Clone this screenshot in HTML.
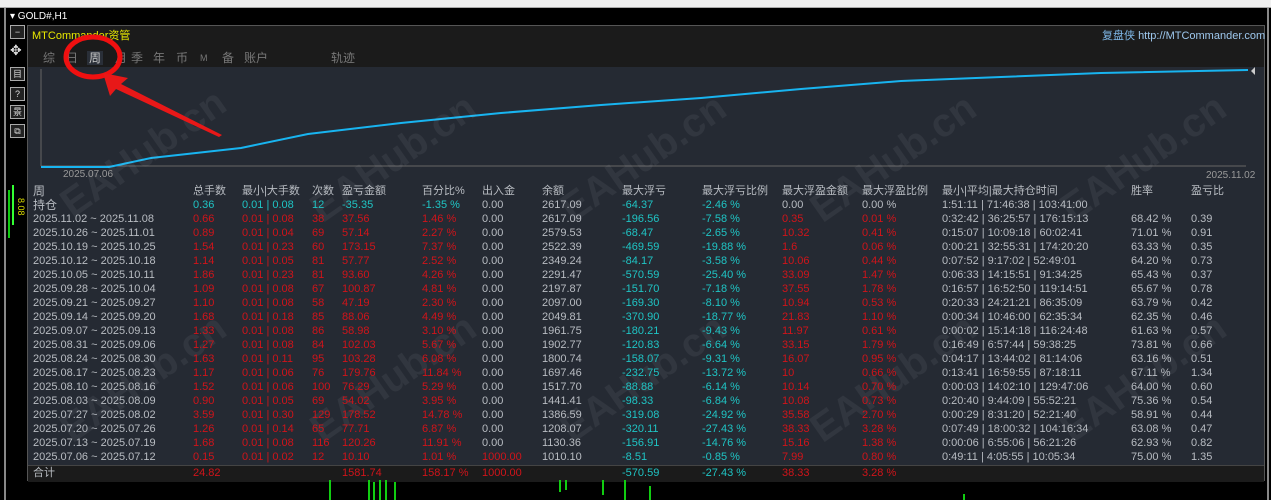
<!DOCTYPE html>
<html><head><meta charset="utf-8"><style>
*{margin:0;padding:0;box-sizing:border-box}
body{width:1271px;height:500px;overflow:hidden;background:#000;font-family:"Liberation Sans","Noto Sans CJK SC",sans-serif;position:relative}
.top{position:absolute;left:0;top:0;width:1271px;height:8px;background:#f0f0f0;border-bottom:1px solid #aaa}
.frame{position:absolute;left:4px;top:8px;width:1265px;height:492px;background:#000;border-left:2px solid #888;border-right:2px solid #888}
.t{position:absolute;font-size:11px;white-space:nowrap;line-height:13px}
.panel{position:absolute;left:27px;top:25px;width:1238px;height:456px;border:1px solid #555;background:#252a33}
.hdr{position:absolute;left:0;top:0;width:100%;height:41px;background:#1b1b1b}
.tab{position:absolute;top:25px;color:#777;font-size:12px;line-height:14px}
.r{position:absolute;left:0;width:100%;height:14px}
.r span{position:absolute;font-size:11px;white-space:nowrap;top:0;line-height:14px;color:#b8bcc2}
.a{left:5px}.b{left:165px}.c{left:214px}.d{left:284px}.e{left:314px}.f{left:394px}.g{left:454px}.h{left:514px}.i{left:594px}.j{left:674px}.k{left:754px}.l{left:834px}.m{left:914px}.n{left:1103px}.o{left:1163px}
.R span.b,.R span.c,.R span.d,.R span.e,.R span.f,.R span.k,.R span.l{color:#d0141a}
.R span.i,.R span.j{color:#1fc4c4}
.icon{position:absolute;left:10px;width:15px;height:14px;border:1px solid #aaa;background:#222;color:#ddd;font-size:9px;text-align:center;line-height:12px}
.wm{position:absolute;font-size:40px;font-weight:bold;color:rgba(255,255,255,0.06);transform:rotate(-35deg);white-space:nowrap}
</style></head><body>
<div class="top"></div>
<div class="frame"></div>
<div class="t" style="left:10px;top:10px;color:#fff;font-size:10px">▾ GOLD#,H1</div>
<div class="icon" style="top:25px">−</div>
<div class="t" style="left:10px;top:44px;color:#ddd;font-size:14px">✥</div>
<div class="icon" style="top:67px">目</div>
<div class="icon" style="top:87px">?</div>
<div class="icon" style="top:105px">景</div>
<div class="icon" style="top:124px">⧉</div>
<div style="position:absolute;left:8px;top:190px;width:2px;height:48px;background:#1c1"></div>
<div style="position:absolute;left:12px;top:185px;width:2px;height:40px;background:#3f3"></div>
<div style="position:absolute;left:15px;top:195px;width:8px;height:14px;color:#dd0;font-size:9px;transform:rotate(90deg)">8.08</div>
<div class="panel">
 <div class="hdr">
  <div class="t" style="left:4px;top:4px;color:#e8e800;font-size:11px">MTCommander资管</div>
  <div class="t" style="left:1074px;top:4px;color:#7fb8e8;font-size:11px">复盘侠 <span style="color:#9ec8ee">http://MTCommander.com</span></div>
  <div class="tab" style="left:15px">综</div>
  <div class="tab" style="left:38px">日</div>
  <div class="tab" style="left:59px;color:#ccc;background:#2a2f38;padding:0 2px">周</div>
  <div class="tab" style="left:87px">月</div>
  <div class="tab" style="left:103px">季</div>
  <div class="tab" style="left:125px">年</div>
  <div class="tab" style="left:148px">币</div>
  <div class="tab" style="left:172px;font-size:9px">M</div>
  <div class="tab" style="left:194px">备</div>
  <div class="tab" style="left:216px">账户</div>
  <div class="tab" style="left:303px">轨迹</div>
 </div>
 <svg style="position:absolute;left:0;top:0" width="1238" height="160">
  <line x1="13" y1="43" x2="13" y2="140" stroke="#666"/>
  <line x1="13" y1="140" x2="1218" y2="140" stroke="#666"/>
  <polyline fill="none" stroke="#18b4f0" stroke-width="2" points="13,141 81,141 123,132 213,122 280,108 373,97 473,87 573,79 673,72 773,63 873,55 973,51 1073,47 1220,44"/>
 </svg>
 <div class="t" style="left:35px;top:142px;color:#999;font-size:10px">2025.07.06</div>
 <div class="t" style="left:1178px;top:143px;color:#999;font-size:10px">2025.11.02</div>
 <div class="wm" style="left:20px;top:105px">EAHub.cn</div>
 <div class="wm" style="left:270px;top:110px">EAHub.cn</div>
 <div class="wm" style="left:520px;top:110px">EAHub.cn</div>
 <div class="wm" style="left:770px;top:110px">EAHub.cn</div>
 <div class="wm" style="left:1020px;top:110px">EAHub.cn</div>
 <div class="wm" style="left:20px;top:330px">EAHub.cn</div>
 <div class="wm" style="left:270px;top:330px">EAHub.cn</div>
 <div class="wm" style="left:520px;top:330px">EAHub.cn</div>
 <div class="wm" style="left:770px;top:330px">EAHub.cn</div>
 <div class="wm" style="left:1020px;top:330px">EAHub.cn</div>
 <div class="r" style="top:158px"><span class="a" style="font-size:12px">周</span><span class="b">总手数</span><span class="c">最小|大手数</span><span class="d">次数</span><span class="e">盈亏金额</span><span class="f">百分比%</span><span class="g">出入金</span><span class="h">余额</span><span class="i">最大浮亏</span><span class="j">最大浮亏比例</span><span class="k">最大浮盈金额</span><span class="l">最大浮盈比例</span><span class="m">最小|平均|最大持仓时间</span><span class="n">胜率</span><span class="o">盈亏比</span></div>
 <div class="r" style="top:172px"><span class="a" style="font-size:12px">持仓</span><span class="b" style="color:#1fc4c4">0.36</span><span class="c" style="color:#1fc4c4">0.01 | 0.08</span><span class="d" style="color:#1fc4c4">12</span><span class="e" style="color:#1fc4c4">-35.35</span><span class="f" style="color:#1fc4c4">-1.35 %</span><span class="g">0.00</span><span class="h">2617.09</span><span class="i" style="color:#1fc4c4">-64.37</span><span class="j" style="color:#1fc4c4">-2.46 %</span><span class="k">0.00</span><span class="l">0.00 %</span><span class="m">1:51:11 | 71:46:38 | 103:41:00</span></div>
 <div class="r R" style="top:186px"><span class="a">2025.11.02 ~ 2025.11.08</span><span class="b">0.66</span><span class="c">0.01 | 0.08</span><span class="d">38</span><span class="e">37.56</span><span class="f">1.46 %</span><span class="g">0.00</span><span class="h">2617.09</span><span class="i">-196.56</span><span class="j">-7.58 %</span><span class="k">0.35</span><span class="l">0.01 %</span><span class="m">0:32:42 | 36:25:57 | 176:15:13</span><span class="n">68.42 %</span><span class="o">0.39</span></div>
 <div class="r R" style="top:200px"><span class="a">2025.10.26 ~ 2025.11.01</span><span class="b">0.89</span><span class="c">0.01 | 0.04</span><span class="d">69</span><span class="e">57.14</span><span class="f">2.27 %</span><span class="g">0.00</span><span class="h">2579.53</span><span class="i">-68.47</span><span class="j">-2.65 %</span><span class="k">10.32</span><span class="l">0.41 %</span><span class="m">0:15:07 | 10:09:18 | 60:02:41</span><span class="n">71.01 %</span><span class="o">0.91</span></div>
 <div class="r R" style="top:214px"><span class="a">2025.10.19 ~ 2025.10.25</span><span class="b">1.54</span><span class="c">0.01 | 0.23</span><span class="d">60</span><span class="e">173.15</span><span class="f">7.37 %</span><span class="g">0.00</span><span class="h">2522.39</span><span class="i">-469.59</span><span class="j">-19.88 %</span><span class="k">1.6</span><span class="l">0.06 %</span><span class="m">0:00:21 | 32:55:31 | 174:20:20</span><span class="n">63.33 %</span><span class="o">0.35</span></div>
 <div class="r R" style="top:228px"><span class="a">2025.10.12 ~ 2025.10.18</span><span class="b">1.14</span><span class="c">0.01 | 0.05</span><span class="d">81</span><span class="e">57.77</span><span class="f">2.52 %</span><span class="g">0.00</span><span class="h">2349.24</span><span class="i">-84.17</span><span class="j">-3.58 %</span><span class="k">10.06</span><span class="l">0.44 %</span><span class="m">0:07:52 | 9:17:02 | 52:49:01</span><span class="n">64.20 %</span><span class="o">0.73</span></div>
 <div class="r R" style="top:242px"><span class="a">2025.10.05 ~ 2025.10.11</span><span class="b">1.86</span><span class="c">0.01 | 0.23</span><span class="d">81</span><span class="e">93.60</span><span class="f">4.26 %</span><span class="g">0.00</span><span class="h">2291.47</span><span class="i">-570.59</span><span class="j">-25.40 %</span><span class="k">33.09</span><span class="l">1.47 %</span><span class="m">0:06:33 | 14:15:51 | 91:34:25</span><span class="n">65.43 %</span><span class="o">0.37</span></div>
 <div class="r R" style="top:256px"><span class="a">2025.09.28 ~ 2025.10.04</span><span class="b">1.09</span><span class="c">0.01 | 0.08</span><span class="d">67</span><span class="e">100.87</span><span class="f">4.81 %</span><span class="g">0.00</span><span class="h">2197.87</span><span class="i">-151.70</span><span class="j">-7.18 %</span><span class="k">37.55</span><span class="l">1.78 %</span><span class="m">0:16:57 | 16:52:50 | 119:14:51</span><span class="n">65.67 %</span><span class="o">0.78</span></div>
 <div class="r R" style="top:270px"><span class="a">2025.09.21 ~ 2025.09.27</span><span class="b">1.10</span><span class="c">0.01 | 0.08</span><span class="d">58</span><span class="e">47.19</span><span class="f">2.30 %</span><span class="g">0.00</span><span class="h">2097.00</span><span class="i">-169.30</span><span class="j">-8.10 %</span><span class="k">10.94</span><span class="l">0.53 %</span><span class="m">0:20:33 | 24:21:21 | 86:35:09</span><span class="n">63.79 %</span><span class="o">0.42</span></div>
 <div class="r R" style="top:284px"><span class="a">2025.09.14 ~ 2025.09.20</span><span class="b">1.68</span><span class="c">0.01 | 0.18</span><span class="d">85</span><span class="e">88.06</span><span class="f">4.49 %</span><span class="g">0.00</span><span class="h">2049.81</span><span class="i">-370.90</span><span class="j">-18.77 %</span><span class="k">21.83</span><span class="l">1.10 %</span><span class="m">0:00:34 | 10:46:00 | 62:35:34</span><span class="n">62.35 %</span><span class="o">0.46</span></div>
 <div class="r R" style="top:298px"><span class="a">2025.09.07 ~ 2025.09.13</span><span class="b">1.33</span><span class="c">0.01 | 0.08</span><span class="d">86</span><span class="e">58.98</span><span class="f">3.10 %</span><span class="g">0.00</span><span class="h">1961.75</span><span class="i">-180.21</span><span class="j">-9.43 %</span><span class="k">11.97</span><span class="l">0.61 %</span><span class="m">0:00:02 | 15:14:18 | 116:24:48</span><span class="n">61.63 %</span><span class="o">0.57</span></div>
 <div class="r R" style="top:312px"><span class="a">2025.08.31 ~ 2025.09.06</span><span class="b">1.27</span><span class="c">0.01 | 0.08</span><span class="d">84</span><span class="e">102.03</span><span class="f">5.67 %</span><span class="g">0.00</span><span class="h">1902.77</span><span class="i">-120.83</span><span class="j">-6.64 %</span><span class="k">33.15</span><span class="l">1.79 %</span><span class="m">0:16:49 | 6:57:44 | 59:38:25</span><span class="n">73.81 %</span><span class="o">0.66</span></div>
 <div class="r R" style="top:326px"><span class="a">2025.08.24 ~ 2025.08.30</span><span class="b">1.63</span><span class="c">0.01 | 0.11</span><span class="d">95</span><span class="e">103.28</span><span class="f">6.08 %</span><span class="g">0.00</span><span class="h">1800.74</span><span class="i">-158.07</span><span class="j">-9.31 %</span><span class="k">16.07</span><span class="l">0.95 %</span><span class="m">0:04:17 | 13:44:02 | 81:14:06</span><span class="n">63.16 %</span><span class="o">0.51</span></div>
 <div class="r R" style="top:340px"><span class="a">2025.08.17 ~ 2025.08.23</span><span class="b">1.17</span><span class="c">0.01 | 0.06</span><span class="d">76</span><span class="e">179.76</span><span class="f">11.84 %</span><span class="g">0.00</span><span class="h">1697.46</span><span class="i">-232.75</span><span class="j">-13.72 %</span><span class="k">10</span><span class="l">0.66 %</span><span class="m">0:13:41 | 16:59:55 | 87:18:11</span><span class="n">67.11 %</span><span class="o">1.34</span></div>
 <div class="r R" style="top:354px"><span class="a">2025.08.10 ~ 2025.08.16</span><span class="b">1.52</span><span class="c">0.01 | 0.06</span><span class="d">100</span><span class="e">76.29</span><span class="f">5.29 %</span><span class="g">0.00</span><span class="h">1517.70</span><span class="i">-88.88</span><span class="j">-6.14 %</span><span class="k">10.14</span><span class="l">0.70 %</span><span class="m">0:00:03 | 14:02:10 | 129:47:06</span><span class="n">64.00 %</span><span class="o">0.60</span></div>
 <div class="r R" style="top:368px"><span class="a">2025.08.03 ~ 2025.08.09</span><span class="b">0.90</span><span class="c">0.01 | 0.05</span><span class="d">69</span><span class="e">54.02</span><span class="f">3.95 %</span><span class="g">0.00</span><span class="h">1441.41</span><span class="i">-98.33</span><span class="j">-6.84 %</span><span class="k">10.08</span><span class="l">0.73 %</span><span class="m">0:20:40 | 9:44:09 | 55:52:21</span><span class="n">75.36 %</span><span class="o">0.54</span></div>
 <div class="r R" style="top:382px"><span class="a">2025.07.27 ~ 2025.08.02</span><span class="b">3.59</span><span class="c">0.01 | 0.30</span><span class="d">129</span><span class="e">178.52</span><span class="f">14.78 %</span><span class="g">0.00</span><span class="h">1386.59</span><span class="i">-319.08</span><span class="j">-24.92 %</span><span class="k">35.58</span><span class="l">2.70 %</span><span class="m">0:00:29 | 8:31:20 | 52:21:40</span><span class="n">58.91 %</span><span class="o">0.44</span></div>
 <div class="r R" style="top:396px"><span class="a">2025.07.20 ~ 2025.07.26</span><span class="b">1.26</span><span class="c">0.01 | 0.14</span><span class="d">65</span><span class="e">77.71</span><span class="f">6.87 %</span><span class="g">0.00</span><span class="h">1208.07</span><span class="i">-320.11</span><span class="j">-27.43 %</span><span class="k">38.33</span><span class="l">3.28 %</span><span class="m">0:07:49 | 18:00:32 | 104:16:34</span><span class="n">63.08 %</span><span class="o">0.47</span></div>
 <div class="r R" style="top:410px"><span class="a">2025.07.13 ~ 2025.07.19</span><span class="b">1.68</span><span class="c">0.01 | 0.08</span><span class="d">116</span><span class="e">120.26</span><span class="f">11.91 %</span><span class="g">0.00</span><span class="h">1130.36</span><span class="i">-156.91</span><span class="j">-14.76 %</span><span class="k">15.16</span><span class="l">1.38 %</span><span class="m">0:00:06 | 6:55:06 | 56:21:26</span><span class="n">62.93 %</span><span class="o">0.82</span></div>
 <div class="r R" style="top:424px"><span class="a">2025.07.06 ~ 2025.07.12</span><span class="b">0.15</span><span class="c">0.01 | 0.02</span><span class="d">12</span><span class="e">10.10</span><span class="f">1.01 %</span><span class="g" style="color:#d0141a">1000.00</span><span class="h">1010.10</span><span class="i">-8.51</span><span class="j">-0.85 %</span><span class="k">7.99</span><span class="l">0.80 %</span><span class="m">0:49:11 | 4:05:55 | 10:05:34</span><span class="n">75.00 %</span><span class="o">1.35</span></div>
 <div class="r R" style="top:439px;height:17px;background:#1b1b1b;border-top:1px solid #444"><span class="a">合计</span><span class="b">24.82</span><span class="e">1581.74</span><span class="f">158.17 %</span><span class="g" style="color:#d0141a">1000.00</span><span class="i">-570.59</span><span class="j">-27.43 %</span><span class="k">38.33</span><span class="l">3.28 %</span></div>
</div>
<div style="position:absolute;left:1247px;top:67px;width:0;height:0;border:4px solid transparent;border-right-color:#ccc"></div>
<svg style="position:absolute;left:0;top:0" width="1271" height="500">
 <ellipse cx="93" cy="57" rx="27" ry="20" fill="none" stroke="#f01010" stroke-width="5"/>
 <polygon points="103,73 128,78 121,84 222,135 219,137 116,89 110,96" fill="#e81818"/>
 <g stroke="#1c1" stroke-width="2">
  <line x1="330" y1="480" x2="330" y2="500"/><line x1="369" y1="480" x2="369" y2="500"/><line x1="374" y1="482" x2="374" y2="500"/><line x1="380" y1="480" x2="380" y2="500"/><line x1="386" y1="480" x2="386" y2="500"/><line x1="395" y1="482" x2="395" y2="500"/>
  <line x1="560" y1="480" x2="560" y2="492"/><line x1="566" y1="480" x2="566" y2="490"/><line x1="603" y1="480" x2="603" y2="495"/><line x1="625" y1="480" x2="625" y2="500"/><line x1="650" y1="486" x2="650" y2="500"/><line x1="964" y1="494" x2="964" y2="500"/>
 </g>
</svg>
</body></html>
